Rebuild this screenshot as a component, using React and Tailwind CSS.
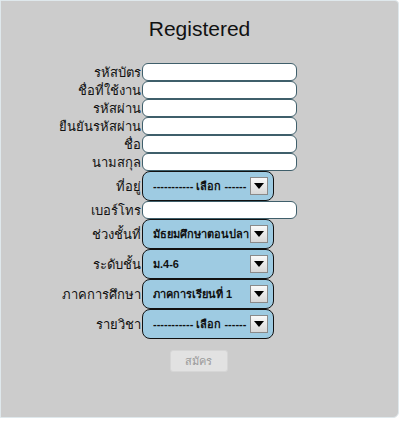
import React from 'react';

const font = { fontFamily: '"Liberation Sans", "Noto Sans", sans-serif' };

const TextRow = ({ label }) => (
  <div className="flex items-center h-[18px]">
    <div className="w-[141px] shrink-0 pr-[1px] text-right text-[13px] leading-none text-[#111] whitespace-nowrap">{label}</div>
    <div className="w-[155px] h-[18px] bg-white border border-[#3f5f6b] rounded-[6px]"></div>
  </div>
);

const SelectRow = ({ label, value }) => (
  <div className="flex items-center h-[30px]">
    <div className="w-[141px] shrink-0 pr-[1px] text-right text-[13px] leading-none text-[#111] whitespace-nowrap">{label}</div>
    <div className="w-[132px] h-[30px] flex items-center bg-[#9ecbe2] border border-[#111] rounded-[8px] pl-[10px] pr-[5px]">
      <span className="flex-1 min-w-0 overflow-hidden whitespace-nowrap text-[11px] font-bold text-[#111]">{value}</span>
      <span className="w-[18px] h-[18px] ml-[1px] shrink-0 flex items-center justify-center border border-[#8a8a8a] bg-gradient-to-b from-[#fafafa] to-[#d8d8d8]">
        <svg width="10" height="6" viewBox="0 0 10 6"><path d="M0 0h10L5 6z" fill="#000" /></svg>
      </span>
    </div>
  </div>
);

export default function App() {
  return (
    <div className="w-[401px] h-[421px] bg-white" style={font}>
      <div className="w-[399px] h-[418px] bg-[#cccccc] border border-[#dfe8ec] rounded-br-[6px] rounded-tr-[4px] flex flex-col items-center">
        <h1 className="mt-[15px] text-[21px] leading-[26px] text-[#111]">Registered</h1>
        <div className="self-start mt-[21px] flex flex-col">
          <TextRow label="รหัสบัตร" />
          <TextRow label="ชื่อที่ใช้งาน" />
          <TextRow label="รหัสผ่าน" />
          <TextRow label="ยืนยันรหัสผ่าน" />
          <TextRow label="ชื่อ" />
          <TextRow label="นามสกุล" />
          <SelectRow label="ที่อยู่" value="----------- เลือก ------" />
          <TextRow label="เบอร์โทร" />
          <SelectRow label="ช่วงชั้นที่" value="มัธยมศึกษาตอนปลาย" />
          <SelectRow label="ระดับชั้น" value="ม.4-6" />
          <SelectRow label="ภาคการศึกษา" value="ภาคการเรียนที่ 1" />
          <SelectRow label="รายวิชา" value="----------- เลือก ------" />
        </div>
        <button className="mt-[11px] ml-[-2px] w-[58px] h-[22px] rounded-[3px] bg-[#e2e2e2] border border-[#d6d6d6] text-[11px] text-[#9a9a9a]">สมัคร</button>
      </div>
    </div>
  );
}
